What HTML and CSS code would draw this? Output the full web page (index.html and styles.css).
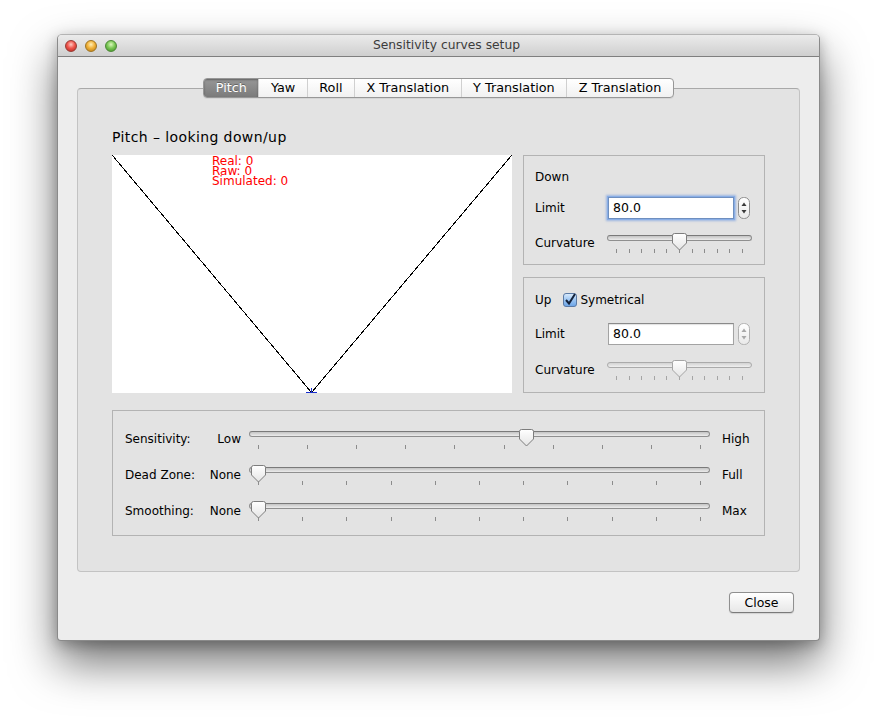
FILE: index.html
```html
<!DOCTYPE html>
<html>
<head>
<meta charset="utf-8">
<title>Sensitivity curves setup</title>
<link rel="stylesheet" href="styles.css">
</head>
<body>
<svg class="defs" width="0" height="0" aria-hidden="true">
  <defs>
    <linearGradient id="thumbGrad" x1="0" y1="0" x2="0" y2="1">
      <stop offset="0" stop-color="#ffffff"/>
      <stop offset="1" stop-color="#e4e4e4"/>
    </linearGradient>
    <linearGradient id="stepGrad" x1="0" y1="0" x2="0" y2="1">
      <stop offset="0" stop-color="#ffffff"/>
      <stop offset="1" stop-color="#e9e9e9"/>
    </linearGradient>
    <linearGradient id="checkGrad" x1="0" y1="0" x2="0" y2="1">
      <stop offset="0" stop-color="#dcecfc"/>
      <stop offset="0.5" stop-color="#9cc5f2"/>
      <stop offset="1" stop-color="#6aa3e6"/>
    </linearGradient>
  </defs>
</svg>
<div class="stage">
  <div class="window">
    <div class="titlebar">
      <div class="lights">
        <span class="light red"></span>
        <span class="light yellow"></span>
        <span class="light green"></span>
      </div>
      <div class="wintitle">Sensitivity curves setup</div>
      <div></div>
    </div>
    <div class="content">
      <div class="tabs">
        <div class="tabbar">
          <div class="tab active">Pitch</div>
          <div class="tab">Yaw</div>
          <div class="tab">Roll</div>
          <div class="tab">X Translation</div>
          <div class="tab">Y Translation</div>
          <div class="tab">Z Translation</div>
        </div>
      </div>
      <div class="pane">
        <div class="pane-title">Pitch – looking down/up</div>
        <div class="main-row">
          <div class="graph">
            <svg width="400" height="238" viewBox="0 0 400 238">
              <rect x="0" y="0" width="400" height="238" fill="#ffffff"/>
              <line x1="0.5" y1="0.5" x2="199.5" y2="237.5" stroke="#000" stroke-width="1" shape-rendering="crispEdges"/>
              <line x1="199.5" y1="237.5" x2="399.5" y2="0.5" stroke="#000" stroke-width="1" shape-rendering="crispEdges"/>
              <path d="M194 237.5 H205 M199.5 233 V238" stroke="#1a2fd0" stroke-width="1" fill="none" shape-rendering="crispEdges"/>
              <text class="gtext" x="100" y="9.5">Real: 0</text>
              <text class="gtext" x="100" y="19.5">Raw: 0</text>
              <text class="gtext" x="100" y="30">Simulated: 0</text>
            </svg>
          </div>
          <div class="side">
            <div class="group down">
              <div class="row row-head">Down</div>
              <div class="row row-limit">
                <span class="lbl">Limit</span>
                <span class="field focus">80.0</span>
                <svg class="stepper" width="12" height="22" viewBox="0 0 12 22">
                  <rect x="0.5" y="0.5" width="11" height="21" rx="5" fill="url(#stepGrad)" stroke="#8c8c8c"/>
                  <path d="M3.5 9 L6 5.5 L8.5 9 Z" fill="#3a3a3a"/>
                  <path d="M3.5 13 L6 16.5 L8.5 13 Z" fill="#3a3a3a"/>
                </svg>
              </div>
              <div class="row row-curve">
                <span class="lbl">Curvature</span>
                <div class="slider small" style="--v:0.5">
                  <div class="track"></div>
                  <div class="ticks"><i></i><i></i><i></i><i></i><i></i><i></i><i></i><i></i><i></i><i></i><i></i></div>
                  <svg class="thumb" width="17" height="19" viewBox="0 0 17 19"><path d="M1.5 3.5 Q1.5 1.5 3.5 1.5 H13.5 Q15.5 1.5 15.5 3.5 V11 L8.5 18 L1.5 11 Z" fill="url(#thumbGrad)" stroke="#7d7d7d"/></svg>
                </div>
              </div>
            </div>
            <div class="group up">
              <div class="row row-head">Up
                <svg class="check" width="14" height="14" viewBox="0 0 14 14">
                  <rect x="0.5" y="0.5" width="13" height="13" rx="2.5" fill="url(#checkGrad)" stroke="#5b7aa4"/>
                  <path d="M3 7 L6 10.5 L12 1" stroke="#14223a" stroke-width="2" fill="none"/>
                </svg>Symetrical
              </div>
              <div class="row row-limit">
                <span class="lbl">Limit</span>
                <span class="field">80.0</span>
                <svg class="stepper" width="12" height="22" viewBox="0 0 12 22">
                  <rect x="0.5" y="0.5" width="11" height="21" rx="5" fill="url(#stepGrad)" stroke="#b0b0b0"/>
                  <path d="M3.5 9 L6 5.5 L8.5 9 Z" fill="#a8a8a8"/>
                  <path d="M3.5 13 L6 16.5 L8.5 13 Z" fill="#a8a8a8"/>
                </svg>
              </div>
              <div class="row row-curve">
                <span class="lbl">Curvature</span>
                <div class="slider small disabled" style="--v:0.5">
                  <div class="track"></div>
                  <div class="ticks"><i></i><i></i><i></i><i></i><i></i><i></i><i></i><i></i><i></i><i></i><i></i></div>
                  <svg class="thumb" width="17" height="19" viewBox="0 0 17 19"><path d="M1.5 3.5 Q1.5 1.5 3.5 1.5 H13.5 Q15.5 1.5 15.5 3.5 V11 L8.5 18 L1.5 11 Z" fill="url(#thumbGrad)" stroke="#a5a5a5"/></svg>
                </div>
              </div>
            </div>
          </div>
        </div>
        <div class="group global">
          <span class="glabel">Sensitivity:</span>
          <span class="gmin">Low</span>
          <div class="slider wide" style="--v:0.605">
            <div class="track"></div>
            <div class="ticks"><i></i><i></i><i></i><i></i><i></i><i></i><i></i><i></i><i></i><i></i></div>
            <svg class="thumb" width="17" height="19" viewBox="0 0 17 19"><path d="M1.5 3.5 Q1.5 1.5 3.5 1.5 H13.5 Q15.5 1.5 15.5 3.5 V11 L8.5 18 L1.5 11 Z" fill="url(#thumbGrad)" stroke="#7d7d7d"/></svg>
          </div>
          <span class="gmax">High</span>

          <span class="glabel">Dead Zone:</span>
          <span class="gmin">None</span>
          <div class="slider wide" style="--v:0">
            <div class="track"></div>
            <div class="ticks"><i></i><i></i><i></i><i></i><i></i><i></i><i></i><i></i><i></i><i></i><i></i></div>
            <svg class="thumb" width="17" height="19" viewBox="0 0 17 19"><path d="M1.5 3.5 Q1.5 1.5 3.5 1.5 H13.5 Q15.5 1.5 15.5 3.5 V11 L8.5 18 L1.5 11 Z" fill="url(#thumbGrad)" stroke="#7d7d7d"/></svg>
          </div>
          <span class="gmax">Full</span>

          <span class="glabel">Smoothing:</span>
          <span class="gmin">None</span>
          <div class="slider wide" style="--v:0">
            <div class="track"></div>
            <div class="ticks"><i></i><i></i><i></i><i></i><i></i><i></i><i></i><i></i><i></i><i></i><i></i></div>
            <svg class="thumb" width="17" height="19" viewBox="0 0 17 19"><path d="M1.5 3.5 Q1.5 1.5 3.5 1.5 H13.5 Q15.5 1.5 15.5 3.5 V11 L8.5 18 L1.5 11 Z" fill="url(#thumbGrad)" stroke="#7d7d7d"/></svg>
          </div>
          <span class="gmax">Max</span>
        </div>
      </div>
      <div class="footer">
        <button class="btn">Close</button>
      </div>
    </div>
  </div>
</div>
</body>
</html>
```
FILE: styles.css
```css
html, body {
  margin: 0;
  background: #ffffff;
}
body {
  font-family: "DejaVu Sans", "Noto Sans", sans-serif;
  font-size: 12px;
  color: #000;
}
.defs {
  position: absolute;
  width: 0;
  height: 0;
}
.stage {
  padding: 34px 57px 79px 57px;
}
.window {
  width: 763px;
  box-sizing: border-box;
  border: 1px solid #8a8a8a;
  border-top-color: #b4b4b4;
  border-radius: 5px 5px 4px 4px;
  background: #ededed;
  box-shadow: 0 22px 45px rgba(0, 0, 0, 0.55), 0 4px 14px rgba(0, 0, 0, 0.25);
  overflow: hidden;
}
.titlebar {
  height: 21px;
  border-bottom: 1px solid #7f7f7f;
  background: linear-gradient(#ebebeb, #cfcfcf);
  display: grid;
  grid-template-columns: 1fr auto 1fr;
  align-items: center;
}
.lights {
  display: flex;
  gap: 8px;
  padding-left: 7px;
}
.light {
  width: 12px;
  height: 12px;
  border-radius: 50%;
  box-sizing: border-box;
}
.light.red {
  background: radial-gradient(circle at 50% 35%, #ffc9c2 0, #f0564d 45%, #b2241c 100%);
  border: 1px solid #973a33;
}
.light.yellow {
  background: radial-gradient(circle at 50% 35%, #fff0b8 0, #f2b33b 45%, #b57812 100%);
  border: 1px solid #9e7422;
}
.light.green {
  background: radial-gradient(circle at 50% 35%, #dcf7bd 0, #7cc957 45%, #3c8a22 100%);
  border: 1px solid #4b8836;
}
.wintitle {
  font-size: 12.3px;
  color: #3c3c3c;
  padding-left: 16px;
  line-height: 21px;
}
.content {
  padding: 21px 19px 27px;
}
.tabs {
  display: flex;
  justify-content: center;
  position: relative;
  z-index: 1;
}
.tabbar {
  display: flex;
  height: 18px;
  border: 1px solid #979797;
  border-radius: 4px;
  background: linear-gradient(#ffffff, #f1f1f1);
  overflow: hidden;
  box-shadow: 0 1px 0 rgba(0, 0, 0, 0.06);
}
.tab {
  padding: 0 11.5px;
  line-height: 18px;
  font-size: 12.8px;
  color: #000;
  border-left: 1px solid #d0d0d0;
}
.tab:first-child {
  border-left: 0;
}
.tab.active {
  color: #fff;
  background: linear-gradient(#979797, #7b7b7b);
  box-shadow: inset 0 1px 2px rgba(0, 0, 0, 0.35);
  text-shadow: 0 -1px 0 rgba(0, 0, 0, 0.3);
}
.pane {
  margin-top: -10px;
  border: 1px solid #c3c3c3;
  border-top-color: #a9a9a9;
  border-radius: 4px;
  background: #e3e3e3;
  padding: 39px 34px 35px;
}
.pane-title {
  font-size: 14px;
  letter-spacing: 0.4px;
  line-height: 18px;
  height: 18px;
  margin-bottom: 9px;
  color: #000;
}
.main-row {
  display: flex;
  gap: 11px;
  height: 238px;
}
.graph {
  width: 400px;
  height: 238px;
  background: #fff;
  flex: none;
}
.graph svg {
  display: block;
}
.gtext {
  font-family: "DejaVu Sans", sans-serif;
  font-size: 12px;
  fill: #ff0000;
}
.side {
  width: 242px;
  flex: none;
  display: flex;
  flex-direction: column;
  gap: 12px;
}
.group {
  border: 1px solid #b3b3b3;
  box-sizing: border-box;
}
.group.down {
  height: 110px;
  padding: 10px 11px 11px;
}
.group.up {
  height: 116px;
  padding: 12px 11px 11px;
}
.row {
  display: flex;
  align-items: center;
}
.row-head {
  height: 20px;
}
.down .row-head {
  padding-top: 1px;
}
.row-limit {
  height: 24px;
  margin-top: 9px;
}
.row-curve {
  height: 22px;
  margin-top: 12px;
}
.up .row-limit {
  margin-top: 12px;
}
.up .row-curve {
  margin-top: 13px;
}
.lbl {
  width: 72px;
  flex: none;
}
.field {
  margin-left: 1px;
  width: 126px;
  height: 22px;
  box-sizing: border-box;
  border: 1px solid #a3a3a3;
  border-top-color: #8a8a8a;
  background: #fff;
  padding-left: 4px;
  font-size: 12.5px;
  line-height: 20px;
  box-shadow: inset 0 1px 1px rgba(0, 0, 0, 0.12);
  flex: none;
}
.field.focus {
  border-color: #6f8fbf;
  box-shadow: 0 0 0 1px #89aee6, 0 0 2px 2px rgba(98, 146, 224, 0.55);
}
.stepper {
  margin-left: 4px;
  flex: none;
  display: block;
}
.check {
  display: block;
  margin-left: 12px;
  margin-right: 3px;
  flex: none;
}
.slider {
  position: relative;
  height: 22px;
  flex: none;
}
.slider.small {
  width: 145px;
}
.slider.wide {
  width: 461px;
}
.track {
  margin-top: 3px;
  height: 4px;
  border: 1px solid #8f8f8f;
  border-top-color: #7a7a7a;
  border-radius: 3px;
  background: linear-gradient(#c4c4c4, #ececec);
}
.slider.disabled .track {
  border-color: #aaaaaa;
  background: linear-gradient(#d2d2d2, #efefef);
}
.ticks {
  margin-top: 8px;
  display: flex;
  justify-content: space-between;
  padding: 0 9px;
}
.ticks i {
  display: block;
  width: 1px;
  height: 4px;
  background: #8c8c8c;
}
.slider.disabled .ticks i {
  background: #a5a5a5;
}
.thumb {
  position: absolute;
  top: 0;
  left: calc(9px + (100% - 18px) * var(--v) - 8.5px);
  display: block;
}
.group.global {
  margin-top: 17px;
  height: 126px;
  padding: 17px 12px 0;
  display: grid;
  grid-template-columns: 72px 36px 461px 30px;
  grid-auto-rows: 22px;
  column-gap: 8px;
  row-gap: 14px;
  align-items: center;
}
.gmin {
  text-align: right;
}
.gmax {
  padding-left: 4px;
}
.footer {
  display: flex;
  justify-content: flex-end;
  margin-top: 20px;
  padding-right: 6px;
}
.btn {
  width: 65px;
  height: 21px;
  padding: 0;
  border: 1px solid #8f8f8f;
  border-bottom-color: #7a7a7a;
  border-radius: 4px;
  background: linear-gradient(#ffffff, #f3f3f3 50%, #e7e7e7);
  box-shadow: 0 1px 1px rgba(0, 0, 0, 0.12);
  font-family: "DejaVu Sans", sans-serif;
  font-size: 12.5px;
  color: #000;
  line-height: 19px;
}
```
